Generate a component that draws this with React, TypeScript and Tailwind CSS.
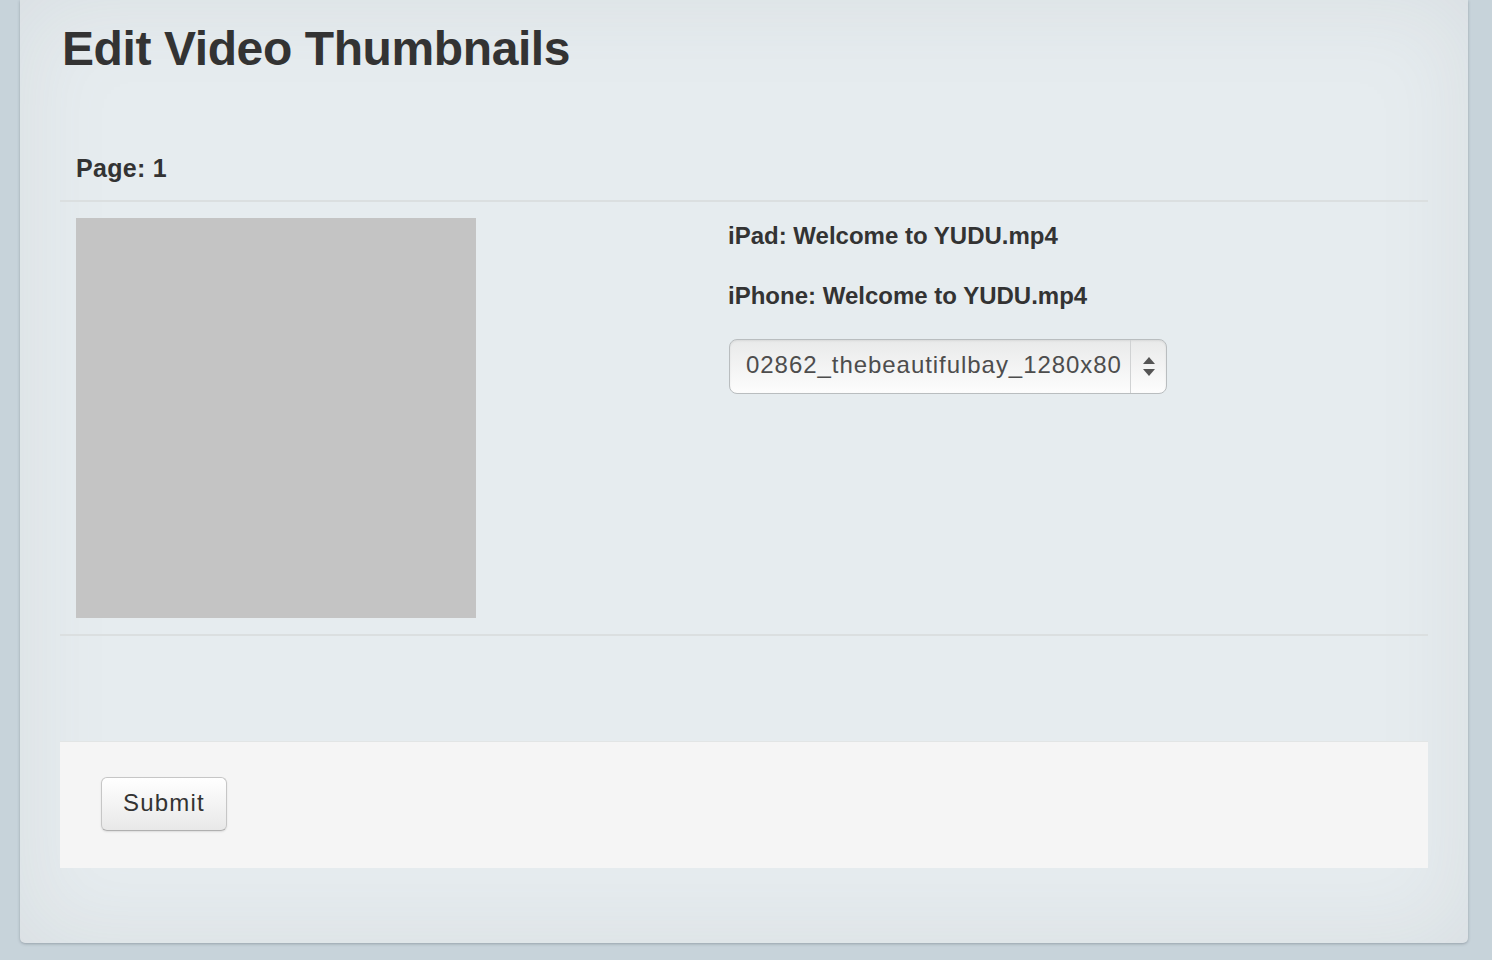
export default function App() {
  return (
    <div className="min-h-screen bg-[#c7d3da] pl-[20px] font-['Liberation_Sans',Arial,sans-serif] text-[#333]">
      <div className="flex h-[943px] w-[1448px] flex-col rounded-b-[5px] bg-[#e6ecef] px-[40px] shadow-[0_1px_3px_rgba(60,70,80,0.35),inset_0_0_90px_rgba(120,130,140,0.13)]">
        <h1 className="pt-[23px] pl-[2px] text-[48px] font-bold leading-[52px] tracking-[-0.4px]">
          Edit Video Thumbnails
        </h1>

        <div className="mt-[79px] border-b-2 border-[#dbdfe0] px-[16px] pb-[18px] text-[25px] font-bold leading-[28px] tracking-[0.3px]">
          Page: 1
        </div>

        <div className="flex border-b-2 border-[#dbdfe0] pt-[16px] pb-[16px]">
          <div className="w-[668px] pl-[16px]">
            <div className="h-[400px] w-[400px] bg-[#c4c4c4]" />
          </div>
          <div className="flex flex-col">
            <div className="mt-[4px] text-[24px] font-bold leading-[28px]">
              iPad: Welcome to YUDU.mp4
            </div>
            <div className="mt-[32px] text-[24px] font-bold leading-[28px]">
              iPhone: Welcome to YUDU.mp4
            </div>
            <div className="mt-[29px] ml-[1px] flex h-[55px] w-[438px] items-stretch rounded-[8px] border border-[#b9bdbf] bg-[linear-gradient(#e9eaea,#fdfdfd)] shadow-[inset_0_1px_2px_rgba(0,0,0,0.08)]">
              <div className="flex flex-1 items-center pb-[3px] pl-[16px] text-[24px] leading-[28px] tracking-[0.95px] text-[#4d4d4d]">
                02862_thebeautifulbay_1280x80
              </div>
              <div className="flex w-[36px] items-center justify-center border-l border-[#d0d2d3]">
                <svg width="12" height="19" viewBox="0 0 12 19">
                  <polygon points="6,0 12,7 0,7" fill="#555" />
                  <polygon points="0,12 12,12 6,19" fill="#555" />
                </svg>
              </div>
            </div>
          </div>
        </div>

        <div className="mt-[105px] h-[127px] border-t border-[#e2e5e5] bg-[#f5f5f5] pt-[35px] pl-[41px]">
          <button className="h-[54px] w-[126px] rounded-[6px] border border-[#c6c6c6] border-b-[#b0b0b0] bg-[linear-gradient(#ffffff,#e8e8e8)] pb-[2px] text-[24px] leading-[28px] tracking-[1.2px] text-[#333] shadow-[0_1px_2px_rgba(0,0,0,0.1)]">
            Submit
          </button>
        </div>
      </div>
    </div>
  )
}
